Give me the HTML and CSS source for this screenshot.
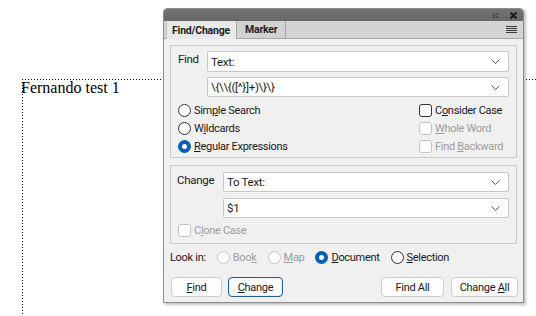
FILE: index.html
```html
<!DOCTYPE html>
<html lang="en">
<head>
    <meta charset="UTF-8">
    <title>Find/Change</title>
    <link rel="stylesheet" href="styles.css">
</head>
<body>
    <div class="document">
        <div class="frame">
            <p class="frame-text">Fernando test 1</p>
        </div>
    </div>

    <div class="panel">
        <div class="titlebar">
            <svg class="title-icon" width="6" height="5" viewBox="0 0 6 5"><path d="M3 0 L0.5 2.5 L3 5 M6 0 L3.5 2.5 L6 5" stroke="#2a2a2a" stroke-width="1" fill="none"/></svg>
            <svg class="title-icon close" width="7" height="7" viewBox="0 0 7 7"><path d="M0.5 0.5 L6.5 6.5 M6.5 0.5 L0.5 6.5" stroke="#1c1c1c" stroke-width="2" fill="none"/></svg>
        </div>
        <div class="tabs">
            <div class="tab active">Find/Change</div>
            <div class="tab marker">Marker</div>
            <div class="tab-spacer"></div>
            <div class="menu-icon"><span></span><span></span><span></span><span></span></div>
        </div>

        <div class="panel-body">
            <div class="group find-group">
                <div class="field-row">
                    <span class="field-label">Find</span>
                    <div class="fields">
                        <div class="select first"><span>Text:</span><svg class="chevron" width="9" height="5" viewBox="0 0 9 5"><path d="M0.5 0.5 L4.5 4.5 L8.5 0.5" stroke="#555" fill="none"/></svg></div>
                        <div class="select"><span>\{\\{([^}]+)\}\}</span><svg class="chevron" width="9" height="5" viewBox="0 0 9 5"><path d="M0.5 0.5 L4.5 4.5 L8.5 0.5" stroke="#555" fill="none"/></svg></div>
                    </div>
                </div>
                <div class="options">
                    <div class="option-col">
                        <label class="option"><span class="radio"></span><span>Sim<u>p</u>le Search</span></label>
                        <label class="option"><span class="radio"></span><span>W<u>i</u>ldcards</span></label>
                        <label class="option"><span class="radio checked"></span><span><u>R</u>egular Expressions</span></label>
                    </div>
                    <div class="option-col checks">
                        <label class="option"><span class="check"></span><span>C<u>o</u>nsider Case</span></label>
                        <label class="option disabled"><span class="check"></span><span><u>W</u>hole Word</span></label>
                        <label class="option disabled"><span class="check"></span><span>Find <u>B</u>ackward</span></label>
                    </div>
                </div>
            </div>

            <div class="group change-group">
                <div class="field-row">
                    <span class="field-label">Change</span>
                    <div class="fields">
                        <div class="select"><span>To Text:</span><svg class="chevron" width="9" height="5" viewBox="0 0 9 5"><path d="M0.5 0.5 L4.5 4.5 L8.5 0.5" stroke="#555" fill="none"/></svg></div>
                        <div class="select"><span>$1</span><svg class="chevron" width="9" height="5" viewBox="0 0 9 5"><path d="M0.5 0.5 L4.5 4.5 L8.5 0.5" stroke="#555" fill="none"/></svg></div>
                    </div>
                </div>
                <label class="option disabled clone"><span class="check"></span><span>C<u>l</u>one Case</span></label>
            </div>

            <div class="look-in">
                <span class="look-label">Look in:</span>
                <label class="option disabled"><span class="radio"></span><span>Boo<u>k</u></span></label>
                <label class="option disabled"><span class="radio"></span><span><u>M</u>ap</span></label>
                <label class="option"><span class="radio checked"></span><span><u>D</u>ocument</span></label>
                <label class="option"><span class="radio"></span><span><u>S</u>election</span></label>
            </div>

            <div class="buttons">
                <button class="btn btn-find"><u>F</u>ind</button>
                <button class="btn btn-change focused"><u>C</u>hange</button>
                <div class="btn-spacer"></div>
                <button class="btn btn-findall">Find All</button>
                <button class="btn btn-changeall">Change <u>A</u>ll</button>
            </div>
        </div>
    </div>
</body>
</html>
```

FILE: styles.css
```css
body {
    margin: 0;
    background-color: #ffffff;
    width: 536px;
    height: 316px;
    overflow: hidden;
    position: relative;
}

/* Document page behind the panel */
.document {
    padding: 79px 0 0 22px;
    height: 237px;
}
.frame {
    height: 100%;
    background:
        repeating-linear-gradient(to right, #000 0 1px, transparent 1px 3px) top left / 100% 1px no-repeat,
        repeating-linear-gradient(to bottom, #000 0 1px, transparent 1px 3px) top left / 1px 100% no-repeat;
}
.frame-text {
    margin: 0;
    padding-top: 1px;
    margin-left: -1px;
    font-family: "Liberation Serif", serif;
    font-size: 16px;
    line-height: 16px;
    color: #000;
}

/* Floating Find/Change panel */
.panel {
    position: absolute;
    left: 163px;
    top: 8px;
    width: 359px;
    height: 293px;
    border: 1px solid #8c8c8c;
    border-radius: 4px 4px 0 0;
    background-color: #f0f0f0;
    box-shadow: 2px 2px 3px rgba(0, 0, 0, 0.25);
    font-family: "Roboto", sans-serif;
    font-size: 11px;
    letter-spacing: -0.3px;
    color: #1a1a1a;
    display: flex;
    flex-direction: column;
}
.titlebar {
    height: 12px;
    background: linear-gradient(#747474, #666666);
    border-radius: 3px 3px 0 0;
    display: flex;
    justify-content: flex-end;
    align-items: center;
    gap: 12px;
    padding-right: 6px;
}
.title-icon {
    display: block;
}
.tabs {
    height: 17px;
    background-color: #d4d4d4;
    border-bottom: 1px solid #a8a8a8;
    display: flex;
    align-items: stretch;
    padding-left: 2px;
}
.tab {
    font-weight: bold;
    font-size: 10.5px;
    letter-spacing: -0.2px;
    padding: 0 6px 0 5px;
    display: flex;
    align-items: center;
    color: #222;
    border-right: 1px solid #a6a6a6;
    background-color: #d2d2d2;
}
.tab.marker {
    padding: 0 8px;
}
.tab.active {
    background-color: #e9e9e9;
    border-left: 1px solid #bdbdbd;
    margin-bottom: -1px;
}
.tab-spacer {
    flex: 1;
}
.menu-icon {
    display: flex;
    flex-direction: column;
    justify-content: center;
    gap: 1px;
    padding-right: 6px;
}
.menu-icon span {
    display: block;
    width: 11px;
    height: 1px;
    background-color: #3a3a3a;
}

.panel-body {
    flex: 1;
    padding: 6px 6px 0 6px;
    display: flex;
    flex-direction: column;
}

.group {
    border: 1px solid #cacaca;
    box-sizing: border-box;
}
.find-group {
    height: 113px;
    padding: 5px 7px 0 7px;
}
.change-group {
    height: 79px;
    margin-top: 7px;
    padding: 6px 7px 0 6px;
}

.field-row {
    display: flex;
}
.field-label {
    padding-top: 1px;
    font-size: 11.5px;
}
.find-group .field-label {
    width: 29px;
}
.change-group .field-label {
    width: 46px;
}
.fields {
    flex: 1;
    display: flex;
    flex-direction: column;
    gap: 5px;
}
.change-group .fields {
    gap: 6px;
}
.select {
    height: 20px;
    box-sizing: border-box;
    background-color: #ffffff;
    border: 1px solid #c6c6c6;
    border-radius: 2px;
    display: flex;
    align-items: center;
    padding: 0 8px 0 3px;
    font-size: 11.5px;
}
.select.first {
    height: 21px;
}
.chevron {
    margin-left: auto;
}

/* Radios and checkboxes */
.options {
    display: flex;
    justify-content: space-between;
    margin-top: 4px;
}
.option-col {
    display: flex;
    flex-direction: column;
}
.option {
    display: flex;
    align-items: center;
    height: 18px;
    gap: 3px;
    white-space: nowrap;
}
.option.disabled {
    color: #9d9d9d;
}
.radio {
    width: 11px;
    height: 11px;
    border: 1px solid #333;
    border-radius: 50%;
    background-color: #fff;
    flex-shrink: 0;
}
.option.disabled .radio {
    border-color: #c4c4c4;
}
.radio.checked {
    border: 4px solid #0060b8;
    width: 5px;
    height: 5px;
}
.check {
    width: 11px;
    height: 11px;
    border: 1px solid #333;
    border-radius: 3px;
    background-color: #fff;
    flex-shrink: 0;
}
.option.disabled .check {
    border-color: #c4c4c4;
}
.checks {
    width: 90px;
}
.clone {
    margin-top: 3px;
    margin-left: 1px;
}

.look-in {
    display: flex;
    align-items: center;
    height: 26px;
}
.look-label {
    margin-right: 11px;
}
.look-in .option {
    margin-right: 11px;
}

.buttons {
    display: flex;
    margin-top: 7px;
    padding-left: 1px;
    gap: 6px;
}
.btn-spacer {
    flex: 1;
}
.btn {
    height: 20px;
    box-sizing: border-box;
    border: 1px solid #cfcfcf;
    border-radius: 4px;
    background-color: #fdfdfd;
    font-family: "Roboto", sans-serif;
    font-size: 11px;
    letter-spacing: -0.3px;
    color: #1a1a1a;
    padding: 0;
}
.btn-find { width: 51px; }
.btn-change { width: 55px; }
.btn-findall { width: 63px; margin-right: 1px; }
.btn-changeall { width: 67px; margin-right: -1px; }
.btn.focused {
    border: 1px solid #1d5f93;
    box-shadow: inset 0 0 0 1px #e6eef6;
}
```
